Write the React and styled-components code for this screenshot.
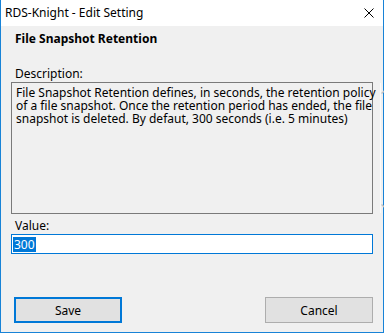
import styled, { createGlobalStyle } from 'styled-components';

const GlobalStyle = createGlobalStyle`
	body {
		margin: 0;
		font-family: 'Noto Sans', 'Liberation Sans', sans-serif;
		font-size: 12px;
		color: #000;
	}
`;

const Window = styled.div`
	width: 384px;
	height: 333px;
	box-sizing: border-box;
	border: 1px solid #1883d7;
	border-top: none;
	display: flex;
	flex-direction: column;
	background: #f0f0f0;
`;

const TitleBar = styled.div`
	height: 26px;
	flex: none;
	background: #fff;
	display: flex;
	align-items: center;
	justify-content: space-between;
	padding: 0 9px 0 4px;
`;

const Title = styled.span`
	line-height: 16px;
	margin-top: -1px;
`;

const CloseIcon = styled.svg`
	width: 10px;
	height: 10px;
	margin-top: -1px;
`;

const Body = styled.div`
	flex: 1;
	display: flex;
	flex-direction: column;
	padding: 5px 10px 9px;
`;

const Heading = styled.div`
	font-weight: 700;
	line-height: 16px;
	padding-left: 4px;
`;

const Label = styled.div`
	line-height: 16px;
	padding-left: 4px;
	margin-top: ${(p) => p.$gap}px;
`;

const ReadOnlyBox = styled.div`
	height: 132px;
	box-sizing: border-box;
	border: 1px solid #7a7a7a;
	display: flex;
`;

const BoxText = styled.div`
	flex: 1;
	padding: 3px 4px;
	line-height: 13px;
	white-space: nowrap;
`;

const Scrollbar = styled.div`
	width: 17px;
	border-left: 1px solid #fbfbfb;
	display: flex;
	flex-direction: column;
	justify-content: space-between;
	align-items: center;
	padding: 6px 0 4px;
`;

const Arrow = styled.svg`
	width: 9px;
	height: 5px;
`;

const ValueBox = styled.div`
	height: 20px;
	box-sizing: border-box;
	border: 1px solid #0078d7;
	background: #fff;
	display: flex;
	align-items: center;
	padding-left: 1px;
`;

const Selected = styled.span`
	background: #0078d7;
	color: #fff;
	line-height: 15px;
	padding: 0 1px;
`;

const ButtonRow = styled.div`
	margin-top: auto;
	display: flex;
	justify-content: space-between;
	padding-left: 3px;
`;

const Button = styled.button`
	width: 108px;
	height: 26px;
	box-sizing: border-box;
	background: #e1e1e1;
	border: ${(p) => (p.$default ? '2px solid #0078d7' : '1px solid #adadad')};
	font: inherit;
	color: #000;
	padding: 0;
`;

const App = () => {
	return (
		<>
			<GlobalStyle />
			<Window>
				<TitleBar>
					<Title>RDS-Knight - Edit Setting</Title>
					<CloseIcon viewBox="0 0 10 10">
						<path d="M0.5 0.5 L9.5 9.5 M9.5 0.5 L0.5 9.5" stroke="#000" strokeWidth="1" />
					</CloseIcon>
				</TitleBar>
				<Body>
					<Heading>File Snapshot Retention</Heading>
					<Label $gap={19}>Description:</Label>
					<ReadOnlyBox>
						<BoxText>
							File Snapshot Retention defines, in seconds, the retention policy
							<br />
							of a file snapshot. Once the retention period has ended, the file
							<br />
							snapshot is deleted. By defaut, 300 seconds (i.e. 5 minutes)
						</BoxText>
						<Scrollbar>
							<Arrow viewBox="0 0 9 5">
								<path d="M0.5 4.5 L4.5 0.8 L8.5 4.5" fill="none" stroke="#c2c2c2" strokeWidth="1.4" />
							</Arrow>
							<Arrow viewBox="0 0 9 5">
								<path d="M0.5 0.5 L4.5 4.2 L8.5 0.5" fill="none" stroke="#c2c2c2" strokeWidth="1.4" />
							</Arrow>
						</Scrollbar>
					</ReadOnlyBox>
					<Label $gap={4}>Value:</Label>
					<ValueBox>
						<Selected>300</Selected>
					</ValueBox>
					<ButtonRow>
						<Button $default>Save</Button>
						<Button>Cancel</Button>
					</ButtonRow>
				</Body>
			</Window>
		</>
	);
};

export default App;
